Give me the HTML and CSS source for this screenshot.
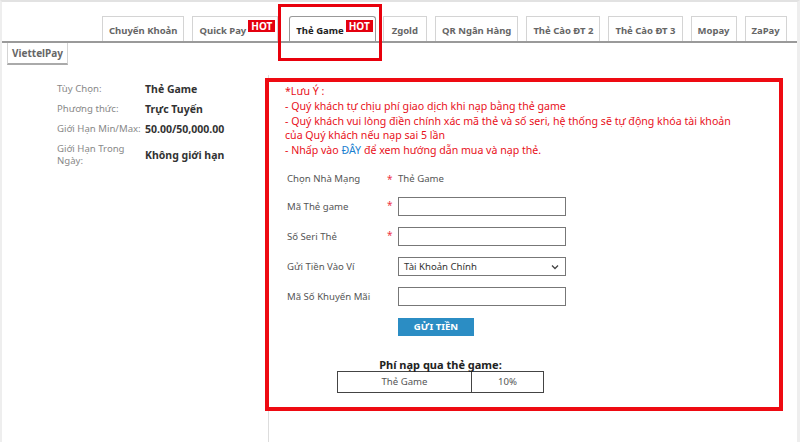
FILE: index.html
```html
<!DOCTYPE html>
<html>
<head>
    <meta charset="utf-8">
    <title>Nạp tiền - Thẻ Game</title>
    <link rel="stylesheet" href="styles.css">
</head>
<body>
    <div class="page">
        <div class="tabs">
            <div class="tab">Chuyển Khoản</div>
            <div class="tab tab-hot">Quick Pay<span class="hot">HOT</span></div>
            <div class="tab tab-hot active">Thẻ Game<span class="hot">HOT</span></div>
            <div class="tab tab-wide">Zgold</div>
            <div class="tab">QR Ngân Hàng</div>
            <div class="tab">Thẻ Cào ĐT 2</div>
            <div class="tab">Thẻ Cào ĐT 3</div>
            <div class="tab">Mopay</div>
            <div class="tab">ZaPay</div>
            <div class="mark-tab"></div>
        </div>
        <div class="tabs-second">
            <div class="tab-low">ViettelPay</div>
        </div>

        <div class="main">
            <div class="side">
                <table class="info">
                    <tr><td class="lbl">Tùy Chọn:</td><td class="val">Thẻ Game</td></tr>
                    <tr><td class="lbl">Phương thức:</td><td class="val">Trực Tuyến</td></tr>
                    <tr><td class="lbl">Giới Hạn Min/Max:</td><td class="val">50.00/50,000.00</td></tr>
                    <tr><td class="lbl">Giới Hạn Trong Ngày:</td><td class="val">Không giới hạn</td></tr>
                </table>
            </div>

            <div class="content">
                <div class="note">
                    *Lưu Ý :<br>
                    - Quý khách tự chịu phí giao dịch khi nạp bằng thẻ game<br>
                    - Quý khách vui lòng điền chính xác mã thẻ và số seri, hệ thống sẽ tự động khóa tài khoản<br>
                    của Quý khách nếu nạp sai 5 lần<br>
                    - Nhấp vào <a href="#">ĐÂY</a> để xem hướng dẫn mua và nạp thẻ.
                </div>

                <div class="form">
                    <div class="row first">
                        <span class="f-lbl">Chọn Nhà Mạng</span>
                        <span class="req">*</span>
                        <span class="f-text">Thẻ Game</span>
                    </div>
                    <div class="row">
                        <span class="f-lbl">Mã Thẻ game</span>
                        <span class="req">*</span>
                        <input type="text" class="f-input">
                    </div>
                    <div class="row">
                        <span class="f-lbl">Số Seri Thẻ</span>
                        <span class="req">*</span>
                        <input type="text" class="f-input">
                    </div>
                    <div class="row">
                        <span class="f-lbl">Gửi Tiền Vào Ví</span>
                        <span class="req"></span>
                        <div class="f-select">
                            <span>Tài Khoản Chính</span>
                            <svg width="8" height="6" viewBox="0 0 8 6"><path d="M1 1.5 L4 4.5 L7 1.5" fill="none" stroke="#444" stroke-width="1.3"/></svg>
                        </div>
                    </div>
                    <div class="row">
                        <span class="f-lbl">Mã Số Khuyến Mãi</span>
                        <span class="req"></span>
                        <input type="text" class="f-input">
                    </div>
                    <div class="row btn-row">
                        <span class="f-lbl"></span>
                        <span class="req"></span>
                        <button class="submit">GỬI TIỀN</button>
                    </div>
                </div>

                <div class="fee">
                    <div class="fee-title">Phí nạp qua thẻ game:</div>
                    <table class="fee-table">
                        <tr><td class="fee-name">Thẻ Game</td><td class="fee-val">10%</td></tr>
                    </table>
                </div>
            </div>
        </div>
    </div>
</body>
</html>
```

FILE: styles.css
```css
body {
    margin: 0;
    padding: 0;
    background: #fff;
    font-family: "Noto Sans", "DejaVu Sans", sans-serif;
    font-size: 11px;
    color: #333;
}
.page {
    position: relative;
    height: 440px;
    border-top: 2px solid #e2e2e2;
    border-left: 2px solid #eee;
    border-right: 3px solid #eee;
    overflow: hidden;
}
.tabs {
    position: relative;
    display: flex;
    align-items: flex-end;
    gap: 8px;
    height: 39px;
    padding-left: 100px;
    border-bottom: 2px solid #9a9a9a;
}
.tab {
    flex-shrink: 0;
    white-space: nowrap;
    height: 24px;
    line-height: 27px;
    padding: 0 6px;
    border: 1px solid #d4d4d4;
    border-bottom: none;
    background: #fff;
    font-weight: bold;
    font-size: 9.5px;
    color: #666;
}
.tab-hot {
    padding-right: 2px;
}
.tab-wide {
    padding: 0 8px;
}
.tab.active {
    margin-left: 3px;
    margin-right: -1px;
    border: 1px solid #999;
    border-bottom: none;
    border-radius: 3px 3px 0 0;
    color: #222;
}
.hot {
    display: inline-block;
    vertical-align: top;
    margin: 3px 0 0 2px;
    background: #e4000f;
    color: #fff;
    font-size: 10px;
    line-height: 12px;
    padding: 0 3px;
}
.mark-tab {
    position: absolute;
    left: 276px;
    top: 2px;
    width: 98px;
    height: 51px;
    border: 3px solid #e8000c;
}
.tabs-second {
    display: flex;
    padding-left: 5px;
}
.tab-low {
    height: 20px;
    line-height: 20px;
    padding: 0 4px;
    border: 1px solid #d4d4d4;
    border-top: none;
    border-bottom: 2px solid #aaa;
    font-weight: bold;
    font-size: 10px;
    color: #666;
}
.main {
    display: flex;
    margin-top: 10px;
}
.side {
    width: 267px;
    box-sizing: border-box;
    border-right: 1px solid #ddd;
    height: 400px;
    padding: 4px 0 0 55px;
}
.info {
    border-collapse: collapse;
}
.info td {
    padding: 2px 0;
    height: 16px;
    vertical-align: middle;
}
.info tr:last-child td {
    padding-top: 4px;
}
.lbl {
    width: 88px;
    color: #888;
    font-size: 9.6px;
    line-height: 12px;
}
.val {
    font-weight: bold;
    color: #333;
    font-size: 10.5px;
}
.content {
    width: 510px;
    height: 325px;
    margin-left: -4px;
    margin-top: 3px;
    border: 4px solid #ee0a12;
}
.note {
    padding: 2px 0 0 16px;
    color: #e8101a;
    font-size: 10.6px;
    line-height: 14.75px;
}
.note a {
    color: #1b7fcf;
    text-decoration: none;
}
.form {
    margin-top: 8px;
    padding-left: 18px;
}
.row {
    display: flex;
    align-items: center;
    height: 30px;
}
.row.first {
    height: 26px;
}
.f-lbl {
    width: 100px;
    font-size: 9.6px;
    color: #555;
}
.req {
    width: 11px;
    align-self: flex-start;
    padding-top: 6px;
    color: #e34;
    font-size: 10px;
}
.f-text {
    font-size: 9.6px;
    color: #555;
}
.f-input {
    width: 168px;
    height: 19px;
    box-sizing: border-box;
    border: 1px solid #777;
    margin: 0;
    padding: 0 4px;
}
.f-select {
    display: flex;
    align-items: center;
    justify-content: space-between;
    width: 168px;
    height: 19px;
    box-sizing: border-box;
    border: 1px solid #777;
    padding: 0 6px 0 5px;
    font-size: 9.6px;
    color: #333;
}
.btn-row {
    height: 30px;
}
.submit {
    width: 76px;
    height: 18px;
    padding: 0;
    border: none;
    background: #2b8dc4;
    color: #fff;
    font-family: "Noto Sans", "DejaVu Sans", sans-serif;
    font-weight: bold;
    font-size: 9.6px;
}
.fee {
    width: 207px;
    margin: 17px 0 0 68px;
}
.fee-title {
    text-align: center;
    font-weight: bold;
    font-size: 11px;
    color: #222;
    line-height: 12px;
}
.fee-table {
    width: 207px;
    border-collapse: collapse;
}
.fee-table td {
    border: 1px solid #444;
    height: 20px;
    text-align: center;
    font-size: 9.6px;
    color: #555;
    padding: 0;
}
.fee-name {
    width: 133px;
}
```
